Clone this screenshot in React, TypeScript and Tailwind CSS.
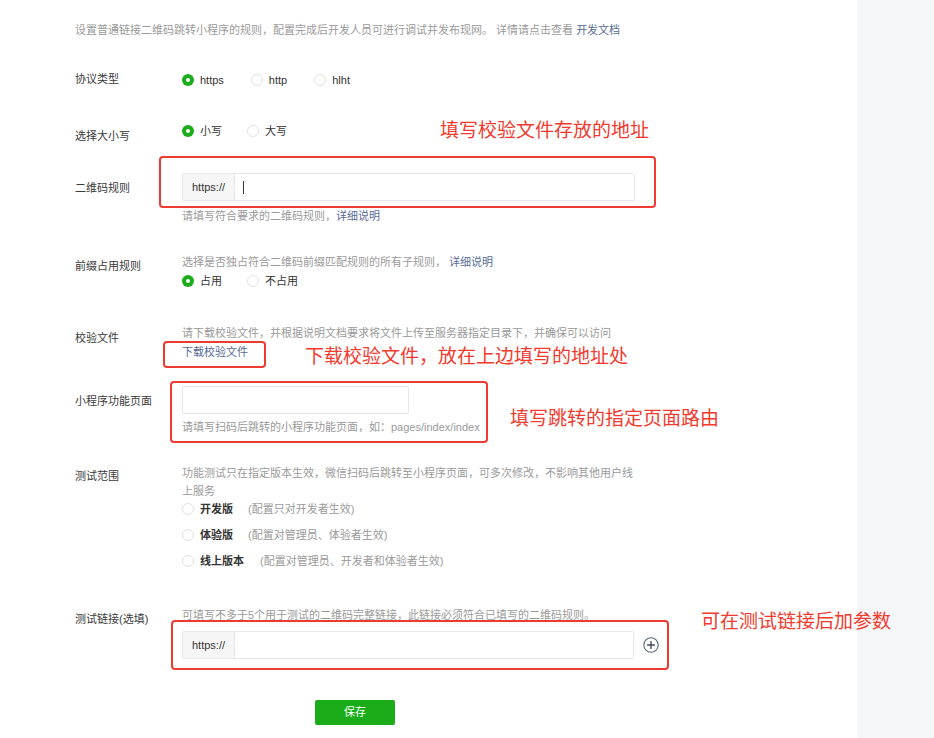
import React from "react";

const font = { fontFamily: '"Liberation Sans", "Noto Sans CJK SC", sans-serif' };

function Radio({ checked, label, bold }: { checked?: boolean; label: React.ReactNode; bold?: boolean }) {
    return (
        <div className="flex items-center h-4">
            {checked ? (
                <span className="w-[12px] h-[12px] rounded-full bg-[#1aad19] flex items-center justify-center">
                    <span className="w-[4px] h-[4px] rounded-full bg-white"></span>
                </span>
            ) : (
                <span className="w-[12px] h-[12px] rounded-full border border-[#e1e1e1] bg-white"></span>
            )}
            <span className={`ml-[6px] text-[11px] text-[#353535] ${bold ? "font-bold" : ""}`}>{label}</span>
        </div>
    );
}

function Row({ label, labelPt, mt, children }: { label: string; labelPt: string; mt: string; children: React.ReactNode }) {
    return (
        <div className={`flex items-start ${mt}`}>
            <div className={`w-[107px] shrink-0 text-[11px] leading-4 text-[#3a3a3a] ${labelPt}`}>{label}</div>
            <div className="flex flex-col">{children}</div>
        </div>
    );
}

function PrefixInput({ width, cursor }: { width: string; cursor?: boolean }) {
    return (
        <div className={`flex h-[28px] ${width} border border-[#e7e7eb] rounded-[2px] bg-white`}>
            <div className="w-[52px] bg-[#f6f6f6] border-r border-[#e7e7eb] flex items-center justify-center text-[11px] text-[#353535]">
                https://
            </div>
            <div className="flex-1 flex items-center pl-[8px]">
                {cursor && <span className="w-px h-[13px] bg-[#353535]"></span>}
            </div>
        </div>
    );
}

export default function App() {
    return (
        <div className="flex h-[738px] w-full overflow-hidden bg-white" style={font}>
            <div className="relative flex-1 pl-[75px] pt-[22px]">
                {/* intro */}
                <p className="text-[11px] leading-4 text-[#9a9a9a] whitespace-nowrap">
                    设置普通链接二维码跳转小程序的规则，配置完成后开发人员可进行调试并发布现网。 详情请点击查看{" "}
                    <span className="text-[#576b95]">开发文档</span>
                </p>

                <Row label="协议类型" labelPt="pt-0" mt="mt-[33px]">
                    <div className="flex gap-[27px] pt-[1px]">
                        <Radio checked label="https" />
                        <Radio label="http" />
                        <Radio label="hlht" />
                    </div>
                </Row>

                <Row label="选择大小写" labelPt="pt-[5px]" mt="mt-[35px]">
                    <div className="flex gap-[25px]">
                        <Radio checked label="小写" />
                        <Radio label="大写" />
                    </div>
                </Row>

                <Row label="二维码规则" labelPt="pt-[7px]" mt="mt-[29px]">
                    <PrefixInput width="w-[453px]" cursor />
                    <p className="mt-[7px] text-[11px] leading-4 text-[#9a9a9a]">
                        请填写符合要求的二维码规则，<span className="text-[#576b95]">详细说明</span>
                    </p>
                </Row>

                <Row label="前缀占用规则" labelPt="pt-[4px]" mt="mt-[30px]">
                    <p className="text-[11px] leading-4 text-[#9a9a9a]">
                        选择是否独占符合二维码前缀匹配规则的所有子规则， <span className="text-[#576b95]">详细说明</span>
                    </p>
                    <div className="flex gap-[25px] mt-[3px]">
                        <Radio checked label="占用" />
                        <Radio label="不占用" />
                    </div>
                </Row>

                <Row label="校验文件" labelPt="pt-[5px]" mt="mt-[36px]">
                    <p className="text-[11px] leading-4 text-[#9a9a9a]">
                        请下载校验文件，并根据说明文档要求将文件上传至服务器指定目录下，并确保可以访问
                    </p>
                    <p className="mt-[3px] text-[11px] leading-4 text-[#576b95]">下载校验文件</p>
                </Row>

                <Row label="小程序功能页面" labelPt="pt-[7px]" mt="mt-[26px]">
                    <div className="w-[227px] h-[28px] border border-[#e7e7eb] rounded-[2px] bg-white"></div>
                    <p className="mt-[5px] text-[11px] leading-4 text-[#9a9a9a]">
                        请填写扫码后跳转的小程序功能页面，如：pages/index/index
                    </p>
                </Row>

                <Row label="测试范围" labelPt="pt-[4px]" mt="mt-[29px]">
                    <p className="w-[452px] text-[11px] leading-[18px] text-[#9a9a9a]">
                        功能测试只在指定版本生效，微信扫码后跳转至小程序页面，可多次修改，不影响其他用户线上服务
                    </p>
                    <div className="flex flex-col gap-[10px] mt-[1px]">
                        <Radio bold label={<>开发版<span className="ml-[15px] font-normal text-[#9a9a9a]">(配置只对开发者生效)</span></>} />
                        <Radio bold label={<>体验版<span className="ml-[15px] font-normal text-[#9a9a9a]">(配置对管理员、体验者生效)</span></>} />
                        <Radio bold label={<>线上版本<span className="ml-[16px] font-normal text-[#9a9a9a]">(配置对管理员、开发者和体验者生效)</span></>} />
                    </div>
                </Row>

                <Row label="测试链接(选填)" labelPt="pt-[4px]" mt="mt-[38px]">
                    <p className="text-[11px] leading-4 text-[#9a9a9a]">
                        可填写不多于5个用于测试的二维码完整链接，此链接必须符合已填写的二维码规则。
                    </p>
                    <div className="flex items-center mt-[8px]">
                        <PrefixInput width="w-[452px]" />
                        <svg className="ml-[9px]" width="16" height="16" viewBox="0 0 16 16" fill="none">
                            <circle cx="8" cy="8" r="7.2" stroke="#5a6478" strokeWidth="1.1" />
                            <path d="M8 4.6v6.8M4.6 8h6.8" stroke="#3f4a60" strokeWidth="1.4" strokeLinecap="round" />
                        </svg>
                    </div>
                </Row>

                <div className="mt-[40px] ml-[240px]">
                    <button className="w-[80px] h-[25px] rounded-[2px] bg-[#1aad19] text-white text-[11px]">保存</button>
                </div>

                {/* annotations */}
                <div className="absolute left-[159px] top-[156px] w-[497px] h-[52px] border-2 border-[#ee3b32] rounded-[4px]"></div>
                <div className="absolute left-[440px] top-[119px] text-[19px] leading-6 text-[#f23a2e] whitespace-nowrap">
                    填写校验文件存放的地址
                </div>

                <div className="absolute left-[163px] top-[341px] w-[103px] h-[27px] border-2 border-[#ee3b32] rounded-[4px]"></div>
                <div className="absolute left-[305px] top-[345px] text-[19px] leading-6 text-[#f23a2e] whitespace-nowrap">
                    下载校验文件，放在上边填写的地址处
                </div>

                <div className="absolute left-[170px] top-[381px] w-[318px] h-[62px] border-2 border-[#ee3b32] rounded-[4px]"></div>
                <div className="absolute left-[510px] top-[407px] text-[19px] leading-6 text-[#f23a2e] whitespace-nowrap">
                    填写跳转的指定页面路由
                </div>

                <div className="absolute left-[171px] top-[620px] w-[498px] h-[50px] border-2 border-[#ee3b32] rounded-[4px]"></div>
                <div className="absolute left-[701px] top-[610px] text-[19px] leading-6 text-[#f23a2e] whitespace-nowrap">
                    可在测试链接后加参数
                </div>
            </div>
            <div className="w-[77px] shrink-0 bg-[#f6f7f8]"></div>
        </div>
    );
}
